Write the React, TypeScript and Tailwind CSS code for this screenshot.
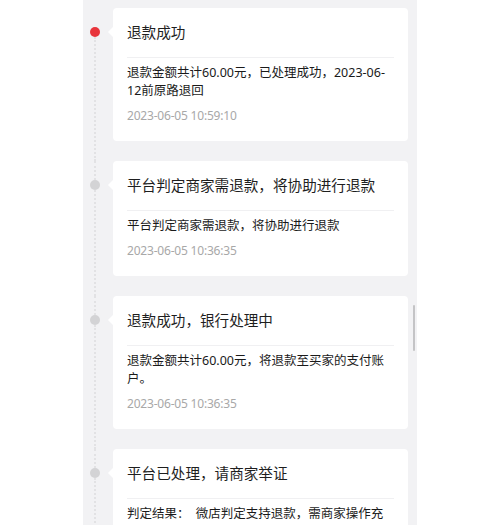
import React from 'react';

type Step = {
  title: string;
  body: string;
  time?: string;
  active?: boolean;
};

const steps: Step[] = [
  {
    title: '退款成功',
    body: '退款金额共计60.00元，已处理成功，2023-06-12前原路退回',
    time: '2023-06-05 10:59:10',
    active: true,
  },
  {
    title: '平台判定商家需退款，将协助进行退款',
    body: '平台判定商家需退款，将协助进行退款',
    time: '2023-06-05 10:36:35',
  },
  {
    title: '退款成功，银行处理中',
    body: '退款金额共计60.00元，将退款至买家的支付账户。',
    time: '2023-06-05 10:36:35',
  },
  {
    title: '平台已处理，请商家举证',
    body: '判定结果：\u2002微店判定支持退款，需商家操作充值后退款',
    time: '2023-06-05 10:30:12',
  },
];

function TimelineItem({ step, first }: { step: Step; first: boolean }) {
  return (
    <div className="flex items-stretch">
      <div className="flex w-[24px] shrink-0 flex-col items-center">
        <div className={`h-[19px] w-0 border-l-2 border-dotted ${first ? 'border-transparent' : 'border-[#e2e2e4]'}`} />
        <div className={`h-[10px] w-[10px] shrink-0 rounded-full ${step.active ? 'bg-[#e8353c]' : 'bg-[#d3d3d5]'}`} />
        <div className="w-0 flex-1 border-l-2 border-dotted border-[#e2e2e4]" />
      </div>
      <div className="ml-[6px] flex-1 pb-[20px]">
        <div className="relative rounded-[4px] bg-white pl-[14px] pr-[14px] pt-[13px] pb-[16px]">
          <div className="absolute left-[-5px] top-[19px] h-0 w-0 border-y-[5px] border-r-[5px] border-y-transparent border-r-white" />
          <div className="text-[14.6px] leading-[22px] text-[#1e1e1e]">{step.title}</div>
          <div className="mt-[14px] border-t border-[#f0f0f2] pt-[6px]">
            <div className="text-[12.5px] leading-[18px] text-[#1a1a1a]">{step.body}</div>
            {step.time && (
              <div className="mt-[7px] text-[12px] leading-[18px] tracking-[-0.2px] text-[#a8a8a8]">{step.time}</div>
            )}
          </div>
        </div>
      </div>
    </div>
  );
}

export default function App() {
  return (
    <div
      className="h-[525px] w-[500px] overflow-hidden bg-white"
      style={{ fontFamily: '"Noto Sans", "Noto Sans CJK SC", sans-serif' }}
    >
      <div className="relative ml-[83px] h-full w-[334px] bg-[#f2f2f4] pt-[8px] pr-[9px]">
        {steps.map((s, i) => (
          <TimelineItem key={i} step={s} first={i === 0} />
        ))}
        <div className="absolute right-[2px] top-[305px] h-[46px] w-[2px] rounded-full bg-[#c4c4c6]" />
      </div>
    </div>
  );
}
